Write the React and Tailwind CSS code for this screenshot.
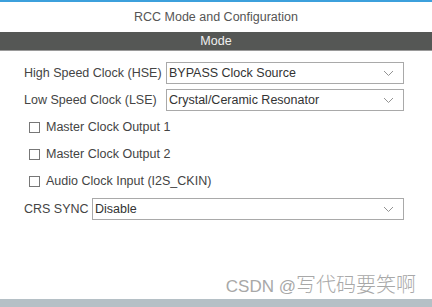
import React from "react";

const Chevron = () => (
  <svg width="11" height="7" viewBox="0 0 11 7" className="shrink-0">
    <path d="M1 1 L5.5 5.5 L10 1" fill="none" stroke="#939393" strokeWidth="1" />
  </svg>
);

const Select = ({ value, className = "" }) => (
  <div
    className={`flex h-[22px] items-center justify-between border border-[#a9a9a9] bg-white pl-[2px] pr-[9px] ${className}`}
  >
    <span className="whitespace-nowrap text-[12.5px] leading-none text-[#333]">{value}</span>
    <Chevron />
  </div>
);

const Check = ({ label }) => (
  <div className="flex h-[27px] items-center pl-[29px]">
    <div className="h-[11px] w-[11px] border border-[#777] bg-white" />
    <span className="ml-[6px] whitespace-nowrap text-[12.5px] text-[#444]">{label}</span>
  </div>
);

export default function App() {
  return (
    <div
      className="flex h-[307px] w-[432px] flex-col overflow-hidden bg-white"
      style={{ fontFamily: '"Liberation Sans", Arial, sans-serif' }}
    >
      <div className="h-[2px] bg-[#3ca0dc]" />
      <div className="flex h-[30px] items-center justify-center text-[12.5px] text-[#555]">
        RCC Mode and Configuration
      </div>
      <div className="flex h-[19px] items-center justify-center border-b border-[#9a9a9a] bg-[#555755] text-[12.5px] text-[#f0f0f0]">
        Mode
      </div>

      {/* form rows */}
      <div className="flex flex-col pt-[11px]">
        <div className="flex items-center pl-[24px]">
          <span className="w-[142px] whitespace-nowrap text-[12.5px] text-[#444]">High Speed Clock (HSE)</span>
          <Select value="BYPASS Clock Source" className="w-[238px]" />
        </div>
        <div className="mt-[5px] flex items-center pl-[24px]">
          <span className="w-[142px] whitespace-nowrap text-[12.5px] text-[#444]">Low Speed Clock (LSE)</span>
          <Select value="Crystal/Ceramic Resonator" className="w-[238px]" />
        </div>

        <div className="mt-[3px]">
          <Check label="Master Clock Output 1" />
          <Check label="Master Clock Output 2" />
          <Check label="Audio Clock Input (I2S_CKIN)" />
        </div>

        <div className="mt-[3px] flex items-center pl-[24px]">
          <span className="w-[68px] whitespace-nowrap text-[12.5px] text-[#444]">CRS SYNC</span>
          <Select value="Disable" className="w-[312px]" />
        </div>
      </div>

      <div className="flex flex-1 items-end justify-end pb-[4px] pr-[16px]">
        <span className="flex items-baseline leading-none text-[#a8a8a8]">
          <span className="text-[17px]">CSDN @</span>
          <span
            className="text-[20px] font-light"
            style={{ fontFamily: '"Noto Sans CJK SC", sans-serif' }}
          >
            写代码要笑啊
          </span>
        </span>
      </div>
      <div className="h-[8px] bg-[#b5c0c6]" />
    </div>
  );
}
